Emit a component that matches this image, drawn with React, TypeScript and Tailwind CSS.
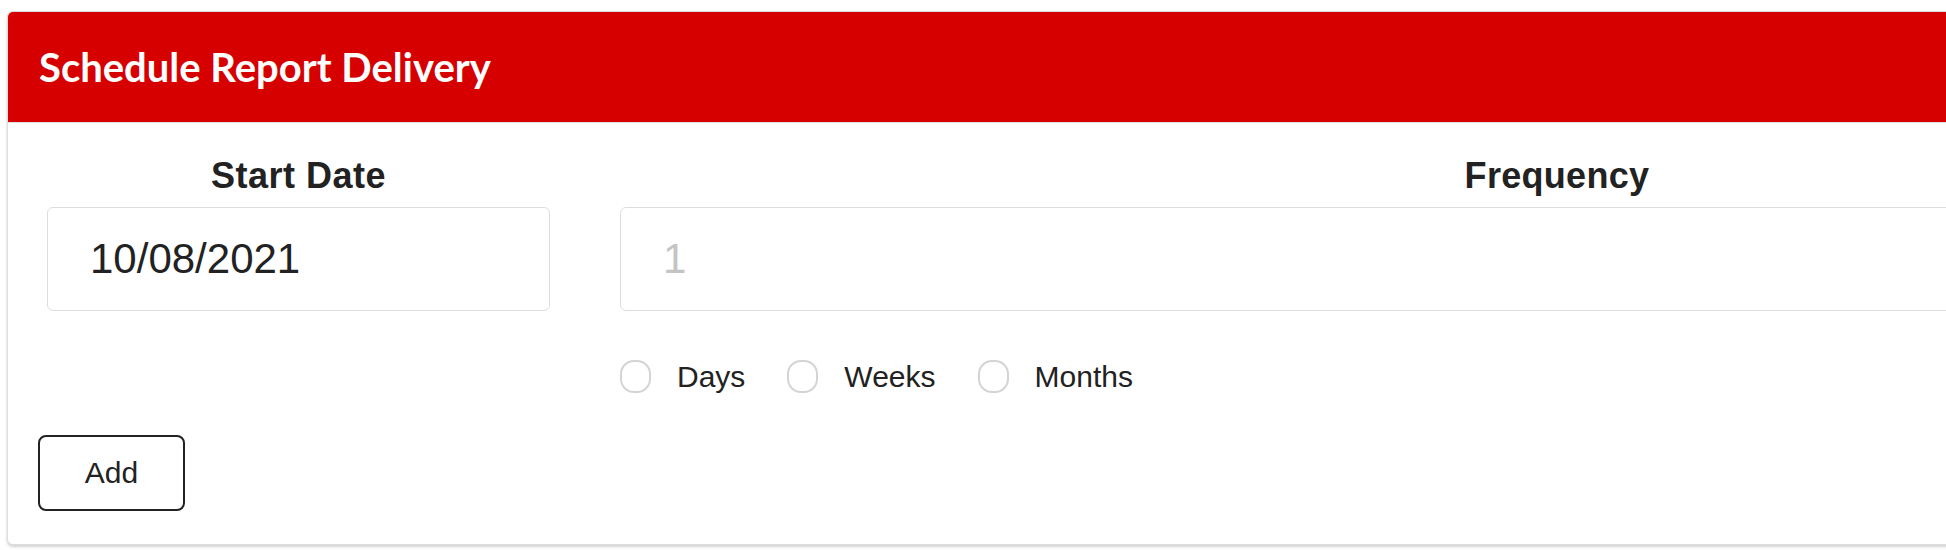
import React from "react";

function Radio({ label }: { label: string }) {
  return (
    <label className="flex items-center gap-[26px]">
      <span className="block w-[31px] h-[33px] rounded-[14px] border-2 border-[#d4d4d4] bg-white" />
      <span className="text-[30px] leading-none text-[#222]">{label}</span>
    </label>
  );
}

export default function App() {
  return (
    <div
      className="w-[1946px] h-[550px] overflow-hidden bg-white pt-[11px] pl-[7px]"
      style={{ fontFamily: '"Liberation Sans", Arial, sans-serif' }}
    >
      <div className="w-[2600px] border border-[#dcdcdc] rounded-[6px] bg-white shadow-[0_2px_3px_rgba(0,0,0,0.18)] overflow-hidden">
        <div className="h-[111px] bg-[#d70000] border-b border-[#dddddd] flex items-center pl-[31px]">
          <h1
            className="text-white text-[40px] font-bold leading-none"
            style={{ fontFamily: "Lato, sans-serif" }}
          >
            Schedule Report Delivery
          </h1>
        </div>
        <div className="pl-[30px] pt-[35px] pb-[33px]">
          <div className="ml-[9px] grid grid-cols-[503px_1874px] gap-x-[70px]">
            <div className="flex flex-col">
              <div className="text-center text-[36px] font-bold leading-none text-[#222] tracking-[0.5px]">
                Start Date
              </div>
              <div className="mt-[13px] h-[104px] border border-[#dddddd] rounded-[6px] flex items-center pl-[42px]">
                <span className="text-[42px] leading-none text-[#222]">10/08/2021</span>
              </div>
            </div>
            <div className="flex flex-col">
              <div className="text-center text-[36px] font-bold leading-none text-[#222] tracking-[0.3px]">
                Frequency
              </div>
              <div className="mt-[13px] h-[104px] border border-[#dddddd] rounded-[6px] flex items-center pl-[42px]">
                <span className="text-[42px] leading-none text-[#c4c4c4]">1</span>
              </div>
              <div className="mt-[49px] flex items-center gap-[42px]">
                <Radio label="Days" />
                <Radio label="Weeks" />
                <Radio label="Months" />
              </div>
            </div>
          </div>
          <button className="mt-[42px] w-[147px] h-[76px] border-2 border-[#222] rounded-[8px] bg-white text-[30px] leading-none text-[#222]">
            Add
          </button>
        </div>
      </div>
    </div>
  );
}
